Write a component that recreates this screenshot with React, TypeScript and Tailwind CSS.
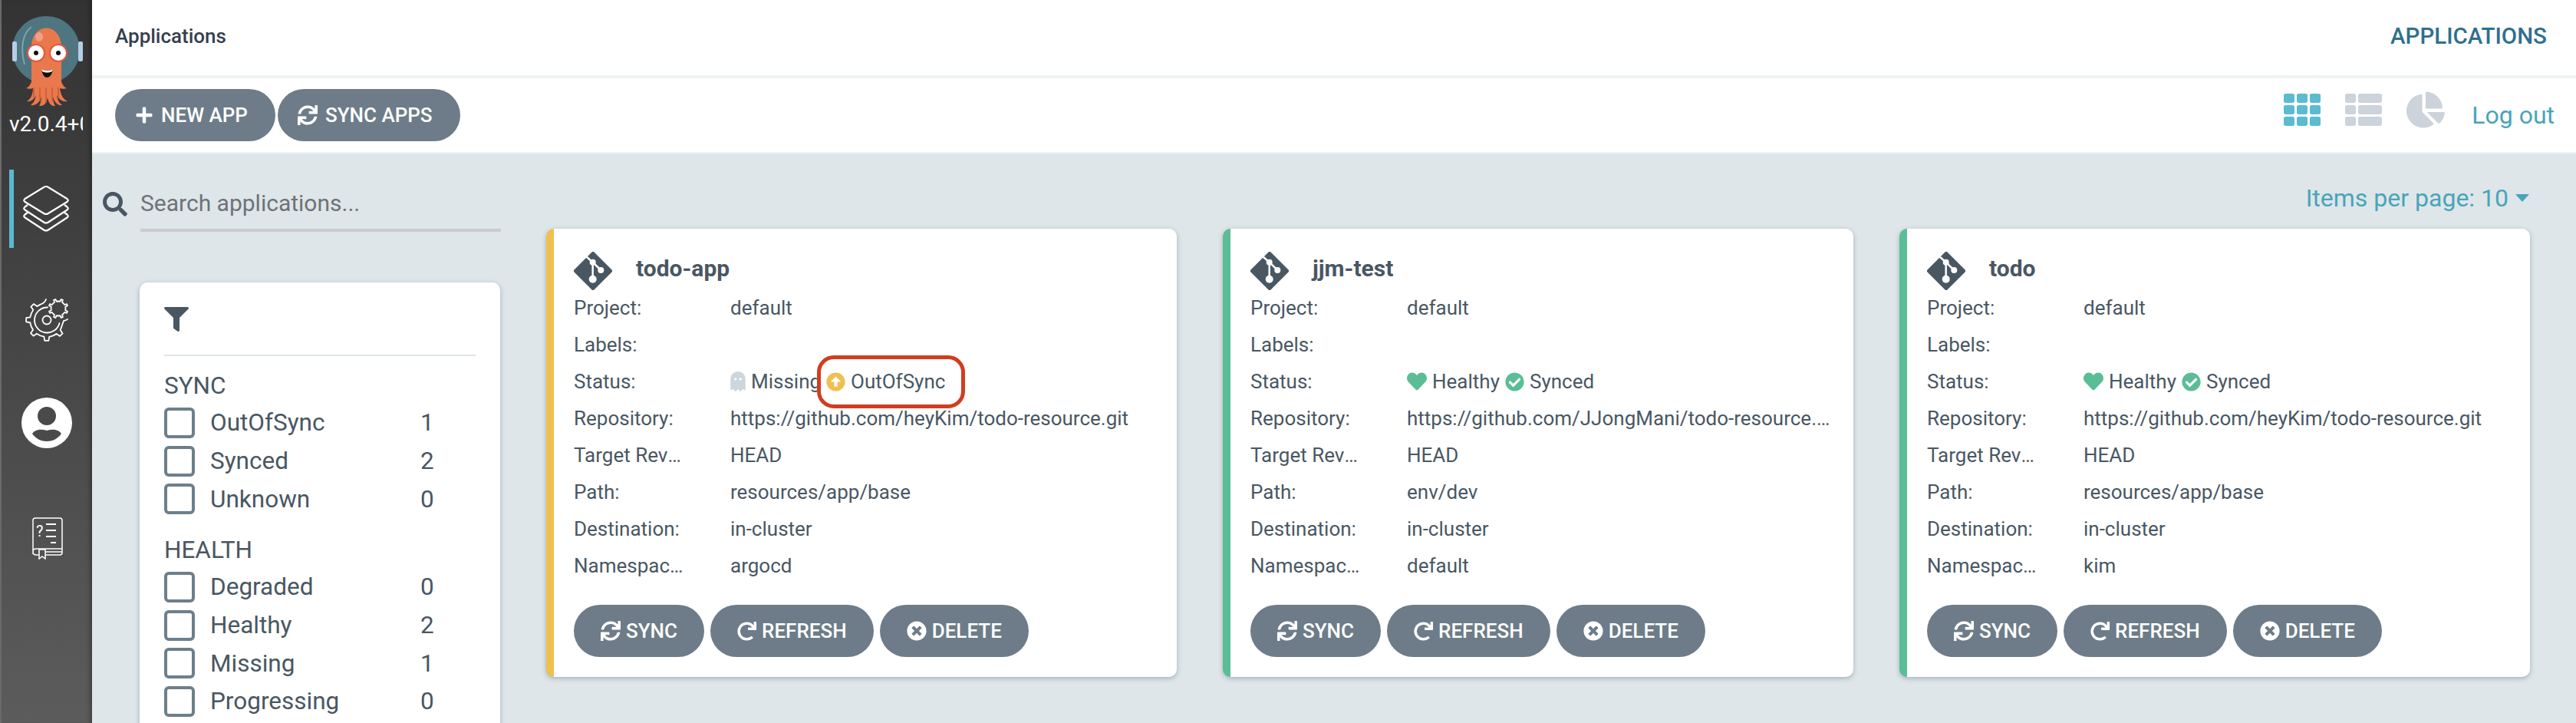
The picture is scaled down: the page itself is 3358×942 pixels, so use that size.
import { FaArrowAltCircleUp, FaChartPie, FaCheckCircle, FaFilter, FaGhost, FaHeart, FaPlus, FaRedo, FaSearch, FaSync, FaTh, FaThList, FaTimesCircle } from 'react-icons/fa';
import { ReactNode } from 'react';

const apps = [
    { name: 'todo-app', border: 'border-l-[#f0c04f]', repo: 'https://github.com/heyKim/todo-resource.git', path: 'resources/app/base', ns: 'argocd', missing: true },
    { name: 'jjm-test', border: 'border-l-[#5bbd96]', repo: 'https://github.com/JJongMani/todo-resource.git', path: 'env/dev', ns: 'default', missing: false },
    { name: 'todo', border: 'border-l-[#5bbd96]', repo: 'https://github.com/heyKim/todo-resource.git', path: 'resources/app/base', ns: 'kim', missing: false },
];

const syncFilters = [['OutOfSync', 1], ['Synced', 2], ['Unknown', 0]] as const;
const healthFilters = [['Degraded', 0], ['Healthy', 2], ['Missing', 1], ['Progressing', 0]] as const;

// teeth of a gear outline, angles in degrees
function gearPoints(cx: number, cy: number, rIn: number, rOut: number, teeth: number, start: number, end: number) {
    const step = (end - start) / teeth;
    const at = (deg: number, r: number) => `${(cx + r * Math.cos((deg * Math.PI) / 180)).toFixed(2)} ${(cy + r * Math.sin((deg * Math.PI) / 180)).toFixed(2)}`;
    const pts: string[] = [];
    for (let i = 0; i < teeth; i++) {
        const a = start + i * step;
        pts.push(at(a, rIn), at(a + step * 0.3, rIn), at(a + step * 0.38, rOut), at(a + step * 0.62, rOut), at(a + step * 0.7, rIn));
    }
    return pts;
}

function Logo() {
    return (
        <svg viewBox="0 0 120 145" className="h-[145px] w-[120px]">
            <circle cx="60" cy="63" r="44" fill="#4e7580" />
            <path d="M41 33c-11 8-15 26-9 49" fill="none" stroke="#7ba6a8" strokeWidth="2" />
            <rect x="16" y="52" width="6" height="26" rx="2" fill="#b6cde6" />
            <rect x="102" y="52" width="6" height="26" rx="2" fill="#b6cde6" />
            <path d="M41 60C41 26 80 26 80 60V104C81 108 84 112 87 113C83 114 81 114 78 113C79 121 82 127 88 130C82 131 77 128 74 122C75 128 77 132 81 135C75 136 71 131 69 124C69 129 70 133 72 136C66 137 63 131 62 125C61 131 58 137 51 136C53 133 54 128 54 124C52 131 47 136 40 135C44 132 46 128 47 122C45 127 40 131 35 130C40 127 43 121 43 113C40 114 38 114 34 113C37 112 40 108 41 104Z" fill="#e9784c" />
            <path d="M44 112V126M52 112V130M60 112V132M68 112V130M76 112V126" stroke="#c95a34" strokeWidth="1.500" />
            <circle cx="47" cy="67" r="12" fill="#e2583e" />
            <circle cx="76" cy="67" r="12" fill="#e2583e" />
            <circle cx="47" cy="67" r="10" fill="#fff" />
            <circle cx="76" cy="67" r="10" fill="#fff" />
            <circle cx="47" cy="67" r="3" fill="#111" />
            <circle cx="76" cy="67" r="3" fill="#111" />
            <path d="M54 88C60 91 64 91 69 88C68 96 64 99 61 99C58 99 55 95 54 88Z" fill="#111" />
            <path d="M54 88C60 91 64 91 69 88L68 91C63 93 60 93 55 91Z" fill="#fff" />
            <ellipse cx="51" cy="46" rx="5" ry="6" fill="#f0a088" />
        </svg>
    );
}

function GitIcon() {
    return (
        <svg viewBox="0 0 50 50" className="h-[50px] w-[50px] shrink-0">
            <path d="M25 2.500L47.500 25L25 47.500L2.500 25Z" fill="#495763" stroke="#495763" strokeWidth="5" strokeLinejoin="round" />
            <path d="M16 6L24.700 13.700V35.700M24.700 13.700L35.300 24" fill="none" stroke="#fff" strokeWidth="2.500" />
            <circle cx="24.700" cy="13.700" r="4" fill="#fff" />
            <circle cx="35.300" cy="24" r="4" fill="#fff" />
            <circle cx="24.700" cy="35.700" r="5" fill="#fff" />
        </svg>
    );
}

function LayersIcon() {
    return (
        <svg viewBox="0 0 60 60" className="h-[60px] w-[60px]" fill="none" stroke="#fff" strokeWidth="2.200" strokeLinejoin="round">
            <path d="M6 35L2.500 37.500Q0 39.500 2.500 41.500L27 57.500Q30 59.500 33 57.500L57.500 41.500Q60 39.500 57.500 37.500L54 35" />
            <path d="M6 25L2.500 27.500Q0 29.500 2.500 31.500L27 47.500Q30 49.500 33 47.500L57.500 31.500Q60 29.500 57.500 27.500L54 25" />
            <path d="M27 2Q30 0 33 2L57.500 17Q60 19 57.500 21L33 36Q30 38 27 36L2.500 21Q0 19 2.500 17Z" />
        </svg>
    );
}

function GearsIcon() {
    const big = gearPoints(28, 28, 22, 27, 5, -112, -337);
    const small = gearPoints(43, 13, 9.5, 12.5, 8, 0, 360);
    return (
        <svg viewBox="0 0 56 56" className="h-[56px] w-[56px]" fill="none" stroke="#fff" strokeWidth="1.800" strokeLinejoin="round" strokeLinecap="round">
            <path d={`M27 1 Q25 6 20 7.500 L${big.join(' L')} L50 29 Q52 29 55 27`} />
            <path d="M29 11.500A16.500 16.500 0 1 0 44.500 32" />
            <circle cx="28" cy="28" r="5.500" />
            <circle cx="43" cy="13" r="3.500" />
            <path d={`M${small.join(' L')} Z`} fill="#434343" />
        </svg>
    );
}

function UserIcon() {
    return (
        <svg viewBox="0 0 66 66" className="h-[66px] w-[66px]">
            <circle cx="33" cy="33" r="33" fill="#fff" />
            <ellipse cx="33" cy="24" rx="12" ry="12" fill="#4a4a4a" />
            <path d="M14 47C18 41 26 41 33 43C40 41 48 41 52 47C47 54 40 57 33 57C26 57 19 54 14 47Z" fill="#4a4a4a" />
        </svg>
    );
}

function DocsIcon() {
    return (
        <svg viewBox="0 0 40 55" className="h-[55px] w-[40px]" fill="none" stroke="#fff" strokeWidth="1.500">
            <path d="M1 48V4Q1 1 4 1H36Q39 1 39 4V46Q39 49 36 49H5Q1 49 1 45Q1 41 5 41H39" />
            <path d="M8 45H39" />
            <path d="M9 42V54L13 51L17 54V42Z" fill="#505050" />
            <path d="M18 9H31M18 17H31M18 25H31M24 33H31" strokeWidth="2" />
            <text x="5" y="25" fill="#fff" stroke="none" fontSize="20" fontFamily="Roboto, sans-serif">?</text>
        </svg>
    );
}

function Sidebar() {
    return (
        <nav className="flex h-full w-[120px] shrink-0 flex-col items-center border-l-2 border-l-[#6a6a6a] bg-gradient-to-b from-[#333333] to-[#5c5c5c] shadow-[inset_-6px_0_6px_-4px_rgba(0,0,0,0.35)]">
            <div className="-ml-[2px] mt-[2px]"><Logo /></div>
            <div className="-ml-[2px] w-[96px] overflow-hidden whitespace-nowrap text-[28px] leading-[30px] text-white">v2.0.4+0c0e</div>
            <div className="mt-[44px] flex h-[102px] w-full items-center pl-[10px]">
                <div className="h-full w-[6px] bg-[#5ab9cf]" />
                <div className="ml-[12px]"><LayersIcon /></div>
            </div>
            <div className="mt-[66px]"><GearsIcon /></div>
            <div className="mt-[73px]"><UserIcon /></div>
            <div className="mt-[90px] ml-[2px]"><DocsIcon /></div>
        </nav>
    );
}

function PillButton({ icon, label, toolbar }: { icon: ReactNode; label: string; toolbar?: boolean }) {
    return (
        <button className={toolbar ? 'flex h-[68px] items-center gap-[10px] rounded-[34px] bg-[#6d7c88] pl-[26px] pr-[36px] text-[26px] font-medium text-white' : 'flex h-[68px] items-center gap-[7px] rounded-[34px] bg-[#6d7c88] px-[35px] text-[26px] font-medium text-white'}>
            {icon}
            <span>{label}</span>
        </button>
    );
}

function FilterGroup({ title, rows }: { title: string; rows: readonly (readonly [string, number])[] }) {
    return (
        <div>
            <div className="h-[47px] text-[31.500px] leading-[47px]">{title}</div>
            {rows.map(([label, count]) => (
                <div key={label} className="flex h-[49.700px] items-center">
                    <div className="h-[40px] w-[40px] rounded-[6px] border-4 border-[#6d7f8b]" />
                    <span className="ml-[20px] w-[274px] text-[31.500px]">{label}</span>
                    <span className="text-[31.500px]">{count}</span>
                </div>
            ))}
        </div>
    );
}

function Row({ label, children }: { label: string; children?: ReactNode }) {
    return (
        <div className="flex h-[48px] items-center text-[26px]">
            <div className="w-[144px] shrink-0 overflow-hidden text-ellipsis whitespace-nowrap">{label}</div>
            <div className="ml-[60px] min-w-0 flex-1 overflow-hidden text-ellipsis whitespace-nowrap">{children}</div>
        </div>
    );
}

function AppCard({ app }: { app: (typeof apps)[number] }) {
    return (
        <div className={`h-[584px] rounded-[10px] border-l-[10px] bg-white pl-[26px] pr-[26px] pt-[30px] text-[#495763] shadow-[0_2px_6px_rgba(90,110,125,0.45)] ${app.border}`}>
            <div className="flex h-[50px] items-center">
                <GitIcon />
                <span className="mb-[8px] ml-[31px] text-[30px] font-bold">{app.name}</span>
            </div>
            <div className="mt-[-1px]">
                <Row label="Project:">default</Row>
                <Row label="Labels:" />
                <div className="flex h-[48px] items-center text-[26px]">
                    <div className="w-[204px] shrink-0">Status:</div>
                    {app.missing ? (
                        <>
                            <FaGhost className="h-[26px] w-[20px] text-[#ccd6dd]" />
                            <span className="ml-[7px] w-[86px] shrink-0 overflow-hidden whitespace-nowrap">Missing</span>
                            <span className="z-10 -my-[11px] flex h-[69px] w-[193px] shrink-0 items-center rounded-[22px] border-[5px] border-[#d13d20] bg-white pl-[7px]">
                                <FaArrowAltCircleUp className="h-[25px] w-[25px] text-[#f0c04f]" />
                                <span className="ml-[7px]">OutOfSync</span>
                            </span>
                        </>
                    ) : (
                        <>
                            <FaHeart className="h-[26px] w-[26px] text-[#5bbd96]" />
                            <span className="ml-[7px]">Healthy</span>
                            <FaCheckCircle className="ml-[7px] h-[25px] w-[25px] text-[#5bbd96]" />
                            <span className="ml-[7px]">Synced</span>
                        </>
                    )}
                </div>
                <Row label="Repository:">{app.repo}</Row>
                <Row label="Target Revision:">HEAD</Row>
                <Row label="Path:">{app.path}</Row>
                <Row label="Destination:">in-cluster</Row>
                <Row label="Namespace:">{app.ns}</Row>
            </div>
            <div className="mt-[27px] flex gap-[8px]">
                <PillButton icon={<FaSync className="h-[26px] w-[26px]" />} label="SYNC" />
                <PillButton icon={<FaRedo className="h-[25px] w-[25px]" />} label="REFRESH" />
                <PillButton icon={<FaTimesCircle className="h-[26px] w-[26px]" />} label="DELETE" />
            </div>
        </div>
    );
}

export default function App() {
    return (
        <div className="flex h-[942px] w-[3358px] overflow-hidden font-['Roboto',sans-serif] text-[#495763]">
            <Sidebar />
            <div className="flex min-w-0 flex-1 flex-col">
                <header className="flex h-[102px] shrink-0 items-center justify-between border-b-4 border-[#eff3f5] bg-white pb-[4px] pl-[30px] pr-[38px]">
                    <span className="text-[26px] font-medium text-[#363f4e]">Applications</span>
                    <span className="text-[29.500px] font-medium text-[#2f6f8f]">APPLICATIONS</span>
                </header>
                <div className="flex h-[98px] shrink-0 items-center justify-between border-b-2 border-[#eff3f5] bg-white pl-[30px] pr-[28px]">
                    <div className="flex gap-[3px]">
                        <PillButton toolbar icon={<FaPlus className="h-[24px] w-[24px]" />} label="NEW APP" />
                        <PillButton toolbar icon={<FaSync className="h-[26px] w-[26px]" />} label="SYNC APPS" />
                    </div>
                    <div className="flex items-center">
                        <FaTh className="mb-[14px] h-[48px] w-[48px] text-[#5bbbd0]" />
                        <FaThList className="mb-[14px] ml-[32px] h-[48px] w-[48px] text-[#ccd3da]" />
                        <FaChartPie className="mb-[14px] ml-[32px] h-[50px] w-[50px] text-[#ccd3da]" />
                        <span className="ml-[35px] text-[32px] text-[#4aa4b8]">Log out</span>
                    </div>
                </div>
                <main className="flex min-h-0 flex-1 bg-[#dee6e9]">
                    <div className="w-[592px] shrink-0 pl-[14px] pt-[40px]">
                        <div className="flex h-[62px] items-center">
                            <FaSearch className="mb-[10px] h-[32px] w-[32px] text-[#495763]" />
                            <span className="ml-[17px] flex h-full w-[470px] items-center border-b-4 border-[#cccccc] pb-[10px] text-[30px] text-[#6f7277]">Search applications...</span>
                        </div>
                        <div className="ml-[48px] mt-[66px] h-[600px] w-[470px] rounded-[10px] bg-white px-[32px] pt-[32px] shadow-[0_2px_6px_rgba(90,110,125,0.45)]">
                            <FaFilter className="h-[32px] w-[32px] text-[#495763]" />
                            <div className="mt-[30px] h-[2px] bg-[#dee6e9]" />
                            <div className="mt-[15px]"><FilterGroup title="SYNC" rows={syncFilters} /></div>
                            <div className="mt-[18px]"><FilterGroup title="HEALTH" rows={healthFilters} /></div>
                        </div>
                    </div>
                    <div className="min-w-0 flex-1 pr-[60px]">
                        <div className="flex h-[98px] items-start justify-end pr-0 pt-[40px] text-[#4aa4b8]">
                            <span className="text-[32px] leading-[36px]">Items per page: 10</span>
                            <div className="ml-[9px] mr-[1px] mt-[13px] h-0 w-0 border-x-[9px] border-t-[10px] border-x-transparent border-t-[#4aa4b8]" />
                        </div>
                        <div className="grid grid-cols-3 gap-[60px]">
                            {apps.map(app => <AppCard key={app.name} app={app} />)}
                        </div>
                    </div>
                </main>
            </div>
        </div>
    );
}
